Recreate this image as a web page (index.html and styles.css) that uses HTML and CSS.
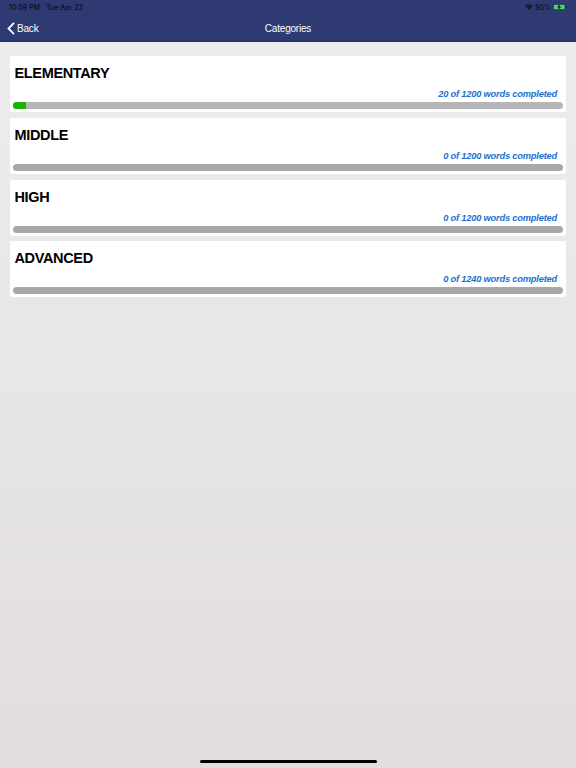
FILE: index.html
```html
<!DOCTYPE html>
<html lang="en">
<head>
    <meta charset="UTF-8" />
    <meta name="viewport" content="width=device-width, initial-scale=1.0" />
    <title>Categories</title>
    <link rel="stylesheet" href="styles.css">
</head>
<body>
    <header class="header">
      <div class="status-bar">
        <span class="time">10:59 PM</span>
        <span class="date">Tue Apr 23</span>
        <svg class="wifi" viewBox="0 0 16 12" fill="none" stroke="#0b0e20" stroke-width="2.8">
          <path d="M1 4.6a10 10 0 0 1 14 0" />
          <path d="M3.8 7.6a6 6 0 0 1 8.4 0" />
          <path d="M8 12L5.6 9.4a3.4 3.4 0 0 1 4.8 0z" fill="#0b0e20" stroke="none" />
        </svg>
        <span class="percent">95%</span>
        <svg class="battery" viewBox="0 0 28 12">
          <rect x="0.6" y="0.6" width="23.8" height="10.8" rx="2.8" fill="none" stroke="#141c40" stroke-width="1.2" />
          <rect x="1.6" y="1.6" width="21.6" height="8.8" rx="1.4" fill="#4cd964" />
          <path d="M26 4v4c1-.4 1.6-1.1 1.6-2s-.6-1.6-1.6-2z" fill="#141c40" />
          <path d="M14.5 0.5L7.500 6.6h4.3L10 11.500l7-6.100h-4.300z" fill="#0b0e20" />
        </svg>
      </div>
      <nav class="nav-bar">
        <a class="back">
          <svg class="chevron" viewBox="0 0 8 13" fill="none" stroke="#fff" stroke-width="1.8">
            <path d="M7 0.900L1.500 6.500L7 12.100" />
          </svg>
          <span>Back</span>
        </a>
        <h1 class="nav-title">Categories</h1>
      </nav>
    </header>

    <main class="categories">
      <section class="card">
        <h2>ELEMENTARY</h2>
        <p class="completed">20 of 1200 words completed</p>
        <div class="progress started"><div class="progress-fill" style="width: 2.5%"></div></div>
      </section>
      <section class="card">
        <h2>MIDDLE</h2>
        <p class="completed">0 of 1200 words completed</p>
        <div class="progress"></div>
      </section>
      <section class="card">
        <h2>HIGH</h2>
        <p class="completed">0 of 1200 words completed</p>
        <div class="progress"></div>
      </section>
      <section class="card">
        <h2>ADVANCED</h2>
        <p class="completed">0 of 1240 words completed</p>
        <div class="progress"></div>
      </section>
    </main>

    <div class="home-indicator"></div>
</body>
</html>
```
FILE: styles.css
```css
* {
  box-sizing: border-box;
}
body {
  display: flex;
  flex-direction: column;
  height: 768px;
  margin: 0;
  font-family: "Liberation Sans", Arial, sans-serif;
  background: linear-gradient(#ededee 42px, #e1dddc);
  overflow: hidden;
}
.header {
  height: 42px;
  background-color: #2f3a73;
  border-bottom: 1px solid #28325f;
}
.status-bar {
  display: flex;
  align-items: center;
  height: 14px;
  padding: 0 9px 0 9px;
  font-family: Inter, "Liberation Sans", sans-serif;
  font-size: 7px;
  font-weight: 500;
  color: #0b0e20;
}
.date {
  margin-left: 6px;
}
.wifi {
  width: 8px;
  height: 6px;
  margin-left: auto;
}
.percent {
  margin: 0 2px;
}
.battery {
  width: 14px;
  height: 6px;
}
.nav-bar {
  display: grid;
  grid-template-columns: 1fr auto 1fr;
  align-items: center;
  height: 28px;
  color: white;
}
.back {
  display: flex;
  align-items: center;
  padding-left: 7px;
  font-size: 10px;
  letter-spacing: -0.2px;
}
.chevron {
  width: 8px;
  height: 13px;
  margin-right: 2px;
}
.nav-title {
  margin: 0;
  font-size: 10px;
  font-weight: normal;
  letter-spacing: -0.2px;
}
.categories {
  display: flex;
  flex-direction: column;
  gap: 5.8px;
  padding: 14px 10.5px 0 10px;
}
.card {
  height: 56px;
  padding: 8px 2.5px 0;
  background-color: white;
  border-radius: 2.5px;
}
.card h2 {
  margin: 0 2px;
  font-size: 14.5px;
  line-height: 18px;
  letter-spacing: -0.35px;
}
.completed {
  margin: 6px 6px 2px;
  font-size: 9.3px;
  font-style: italic;
  font-weight: bold;
  line-height: 12px;
  letter-spacing: -0.2px;
  text-align: right;
  color: #1a70d2;
}
.progress {
  height: 7px;
  border-radius: 3.5px;
  background-color: #a8a8a8;
  overflow: hidden;
}
.progress.started {
  background-color: #b6b6b6;
}
.progress-fill {
  height: 100%;
  background-color: #1cb200;
}
.home-indicator {
  width: 177px;
  height: 3px;
  margin: auto auto 5px;
  border-radius: 1.5px;
  background-color: black;
}
```
